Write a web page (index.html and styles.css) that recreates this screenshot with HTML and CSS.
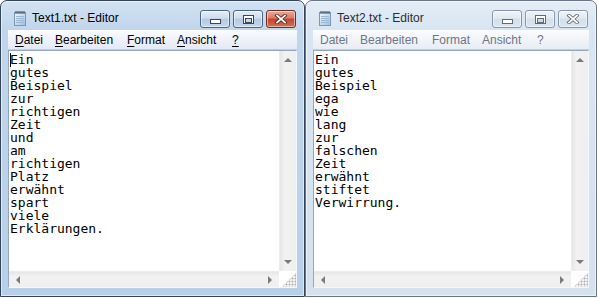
FILE: index.html
```html
<!DOCTYPE html>
<html lang="de">
<head>
    <meta charset="UTF-8">
    <title>Editor</title>
    <link rel="stylesheet" href="styles.css">
</head>
<body>
    <div class="desktop">
        <div class="window active w1">
            <div class="titlebar">
                <svg class="app-icon" width="16" height="16" viewBox="0 0 16 16">
                    <defs>
                        <linearGradient id="pad" x1="0" y1="0" x2="1" y2="1">
                            <stop offset="0" stop-color="#f4f9fe"/>
                            <stop offset="1" stop-color="#9cc0e2"/>
                        </linearGradient>
                    </defs>
                    <rect x="2.5" y="2.5" width="11" height="13" fill="url(#pad)" stroke="#7b97b4"/>
                    <path d="M4 6.5h8M4 8.5h8M4 10.5h8M4 12.5h8" stroke="#9db7d1" stroke-width="1"/>
                    <path d="M4 1v3M6 1v3M8 1v3M10 1v3M12 1v3" stroke="#3d4a58" stroke-width="1"/>
                </svg>
                <span class="title">Text1.txt - Editor</span>
                <div class="caption-buttons">
                    <div class="cap-btn"><span class="glyph-min"></span></div>
                    <div class="cap-btn"><span class="glyph-max"></span></div>
                    <div class="cap-btn close">
                        <svg width="14" height="10" viewBox="0 0 14 10">
                            <path d="M3 1.5l8 7M11 1.5l-8 7" stroke="#4a2620" stroke-width="3.4" stroke-linecap="square"/>
                            <path d="M3 1.5l8 7M11 1.5l-8 7" stroke="#fff" stroke-width="1.8" stroke-linecap="square"/>
                        </svg>
                    </div>
                </div>
            </div>
            <div class="menubar">
                <span class="menu-item m-datei"><u>D</u>atei</span>
                <span class="menu-item m-bearb"><u>B</u>earbeiten</span>
                <span class="menu-item m-format"><u>F</u>ormat</span>
                <span class="menu-item m-ansicht"><u>A</u>nsicht</span>
                <span class="menu-item"><u>?</u></span>
            </div>
            <div class="client">
                <div class="text"><span class="caret"></span>Ein
gutes
Beispiel
zur
richtigen
Zeit
und
am
richtigen
Platz
erwähnt
spart
viele
Erklärungen.</div>
                <div class="vscroll">
                    <span class="arrow up"></span>
                    <span class="arrow down"></span>
                </div>
                <div class="hscroll">
                    <span class="arrow left"></span>
                    <span class="arrow right"></span>
                </div>
                <div class="grip"></div>
            </div>
        </div>

        <div class="window inactive w2">
            <div class="titlebar">
                <svg class="app-icon" width="16" height="16" viewBox="0 0 16 16">
                    <rect x="2.5" y="2.5" width="11" height="13" fill="url(#pad)" stroke="#7b97b4"/>
                    <path d="M4 6.5h8M4 8.5h8M4 10.5h8M4 12.5h8" stroke="#9db7d1" stroke-width="1"/>
                    <path d="M4 1v3M6 1v3M8 1v3M10 1v3M12 1v3" stroke="#3d4a58" stroke-width="1"/>
                </svg>
                <span class="title">Text2.txt - Editor</span>
                <div class="caption-buttons">
                    <div class="cap-btn"><span class="glyph-min"></span></div>
                    <div class="cap-btn"><span class="glyph-max"></span></div>
                    <div class="cap-btn close">
                        <svg width="14" height="10" viewBox="0 0 14 10">
                            <path d="M3 1.5l8 7M11 1.5l-8 7" stroke="#5c6470" stroke-width="3.4" stroke-linecap="square"/>
                            <path d="M3 1.5l8 7M11 1.5l-8 7" stroke="#fff" stroke-width="1.8" stroke-linecap="square"/>
                        </svg>
                    </div>
                </div>
            </div>
            <div class="menubar">
                <span class="menu-item m-datei">Datei</span>
                <span class="menu-item m-bearb">Bearbeiten</span>
                <span class="menu-item m-format">Format</span>
                <span class="menu-item m-ansicht">Ansicht</span>
                <span class="menu-item">?</span>
            </div>
            <div class="client">
                <div class="text">Ein
gutes
Beispiel
ega
wie
lang
zur
falschen
Zeit
erwähnt
stiftet
Verwirrung.</div>
                <div class="vscroll">
                    <span class="arrow up"></span>
                    <span class="arrow down"></span>
                </div>
                <div class="hscroll">
                    <span class="arrow left"></span>
                    <span class="arrow right"></span>
                </div>
                <div class="grip"></div>
            </div>
        </div>
    </div>
</body>
</html>
```

FILE: styles.css
```css
:root {
    --frame-active: #bcd3eb;
    --frame-inactive: #d8e4f1;
    --edge-active: #34445a;
    --edge-inactive: #6a7584;
}

body {
    margin: 0;
    background: #ffffff;
    font-family: "Segoe UI", "Liberation Sans", Arial, sans-serif;
}

.desktop {
    display: flex;
    width: 598px;
    height: 298px;
}

.window {
    box-sizing: border-box;
    height: 297px;
    display: flex;
    flex-direction: column;
    border: 1px solid var(--edge-active);
    border-radius: 7px 7px 0 0;
    padding: 0 7px 8px 7px;
    box-shadow: inset 0 0 0 1px rgba(255,255,255,0.55);
}

.w1 { width: 305px; }
.w2 { width: 292px; }

.window.active {
    background: linear-gradient(180deg, #d2e2f3 0%, #c1d6ec 28px, #b8cfe8 100%);
}

.window.inactive {
    border-color: var(--edge-inactive);
    background: linear-gradient(180deg, #e4edf7 0%, #d9e5f2 28px, #d4e1ef 100%);
}

/* title bar */
.titlebar {
    height: 29px;
    display: flex;
    align-items: flex-start;
    flex-shrink: 0;
}

.app-icon {
    margin: 9px 4px 0 4px;
}

.title {
    margin-top: 9px;
    font-size: 12px;
    line-height: 16px;
    color: #000;
}

.inactive .title {
    color: #2c2c2c;
}

.caption-buttons {
    margin-left: auto;
    margin-top: 9px;
    margin-right: 1px;
    display: flex;
    gap: 3px;
}

.cap-btn {
    box-sizing: border-box;
    width: 30px;
    height: 18px;
    border: 1px solid #4d6584;
    border-radius: 3px;
    display: flex;
    align-items: center;
    justify-content: center;
    background: linear-gradient(180deg, #e6eef8 0%, #cfdcec 45%, #b6cae1 50%, #c4d7ed 100%);
    box-shadow: inset 0 0 0 1px rgba(255,255,255,0.5);
}

.active .cap-btn.close {
    border-color: #6d2b22;
    background: linear-gradient(180deg, #e9a99b 0%, #d87a67 45%, #c2432c 50%, #d26f55 100%);
}

.inactive .cap-btn {
    border-color: #8797a9;
    background: linear-gradient(180deg, #f0f4f9 0%, #e1e9f2 45%, #d3dfec 50%, #dbe5f1 100%);
}

.glyph-min {
    width: 9px;
    height: 3px;
    margin-top: 5px;
    background: #fff;
    border: 1px solid #38475b;
}

.glyph-max {
    box-sizing: border-box;
    width: 11px;
    height: 9px;
    border: 1px solid #38475b;
    background: #fff;
    position: relative;
}

.glyph-max::after {
    content: "";
    position: absolute;
    left: 1px;
    top: 2px;
    width: 5px;
    height: 3px;
    border: 1px solid #38475b;
    background: #cbd9ea;
}

.inactive .glyph-min,
.inactive .glyph-max,
.inactive .glyph-max::after {
    border-color: #5f6b7a;
}

/* menu bar */
.menubar {
    box-sizing: border-box;
    height: 20px;
    flex-shrink: 0;
    display: flex;
    align-items: center;
    padding-left: 7px;
    font-size: 12px;
    color: #000;
    background: linear-gradient(180deg, #fbfcfe 0%, #eef2f9 50%, #e3e9f5 100%);
    border-bottom: 1px solid #c5cedd;
}

.inactive .menubar {
    color: #6d7785;
    background: linear-gradient(180deg, #fbfcfe 0%, #f1f4f9 50%, #e8edf5 100%);
}

.menu-item u {
    text-decoration-thickness: 1px;
    text-underline-offset: 2px;
}

.m-datei { width: 40px; }
.m-bearb { width: 72px; }
.m-format { width: 50px; }
.m-ansicht { width: 55px; }

/* edit area */
.client {
    flex: 1;
    min-height: 0;
    display: grid;
    grid-template-columns: 1fr 17px;
    grid-template-rows: 1fr 16px;
    background: #fff;
    border-left: 1px solid #95a7bd;
    border-top: 1px solid #95a7bd;
    border-right: 1px solid #f4f7fb;
    border-bottom: 1px solid #f4f7fb;
}

.text {
    white-space: pre;
    overflow: hidden;
    font-family: "DejaVu Sans Mono", "Liberation Mono", monospace;
    font-size: 13px;
    line-height: 13px;
    padding: 2px 0 0 1px;
    color: #000;
    position: relative;
}

.caret {
    position: absolute;
    left: 1px;
    top: 2px;
    width: 1px;
    height: 14px;
    background: #000;
}

.vscroll,
.hscroll {
    display: flex;
    justify-content: space-between;
    align-items: center;
    padding: 4px;
}

.vscroll {
    flex-direction: column;
    background: linear-gradient(90deg, #e6e6e6 0%, #f2f2f2 30%, #efefef 100%);
    border-left: 1px solid #ececec;
}

.hscroll {
    background: linear-gradient(180deg, #e6e6e6 0%, #f2f2f2 30%, #efefef 100%);
    border-top: 1px solid #ececec;
}

.grip {
    background:
        radial-gradient(circle, #a8a8a8 0.8px, transparent 1.1px) 0 0 / 3px 3px;
    background-color: #f0f0f0;
    -webkit-mask: linear-gradient(135deg, transparent 55%, #000 55%);
    mask: linear-gradient(135deg, transparent 55%, #000 55%);
}

.arrow {
    width: 0;
    height: 0;
    border: 4px solid transparent;
}

.arrow.up {
    border-bottom-color: #7a7a7a;
    border-top-width: 0;
    margin-top: 3px;
}

.arrow.down {
    border-top-color: #7a7a7a;
    border-bottom-width: 0;
    margin-bottom: 3px;
}

.arrow.left {
    border-right-color: #7a7a7a;
    border-left-width: 0;
    margin-left: 3px;
}

.arrow.right {
    border-left-color: #7a7a7a;
    border-right-width: 0;
    margin-right: 3px;
}
```
